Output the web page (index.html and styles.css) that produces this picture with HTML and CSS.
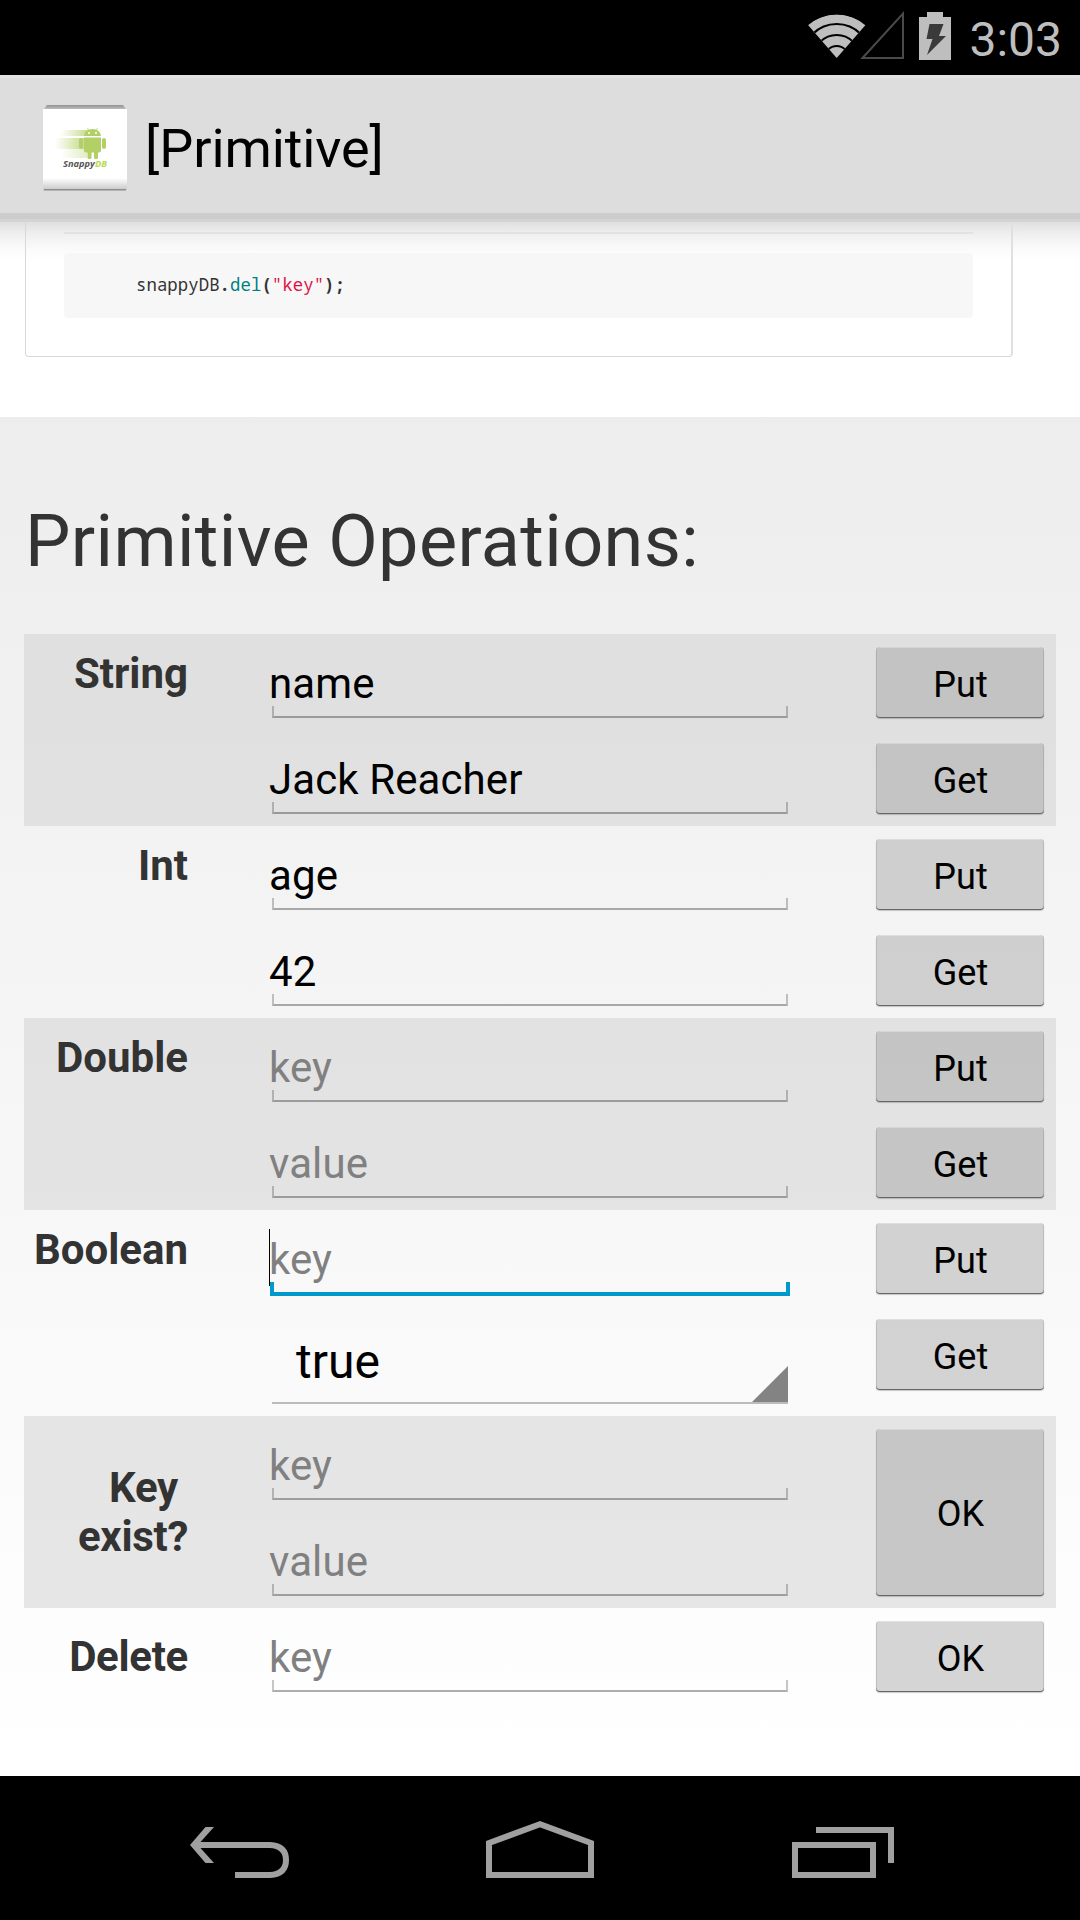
FILE: index.html
```html
<!DOCTYPE html>
<html lang="en">
<head>
<meta charset="utf-8">
<title>Primitive</title>
<link rel="stylesheet" href="styles.css">
</head>
<body>
<header class="status">
  <svg class="status-icons" width="148" height="75" viewBox="808 0 148 75">
    <defs><clipPath id="fan"><path d="M836.7 58 L807.5 24.5 Q836.7 4 866 24.5Z"/></clipPath></defs>
    <g clip-path="url(#fan)">
      <circle cx="836.7" cy="58" r="43.5" fill="#bebebe"/>
      <g fill="none" stroke="#000" stroke-width="2.2">
        <circle cx="836.7" cy="58" r="34"/><circle cx="836.7" cy="58" r="23"/><circle cx="836.7" cy="58" r="12"/>
      </g>
    </g>
    <path d="M862.5 58 L903 13.500 V58Z" fill="none" stroke="#4a4a4a" stroke-width="2"/>
    <path d="M919 17h8v-5h16v5h8v43h-32z" fill="#bebebe"/>
    <path d="M929.500 24h14l-4.500 12h7l-19 19 5.500-16h-6z" fill="#3a3a3a"/>
  </svg>
  <span class="clock">3:03</span>
</header>
<div class="actionbar">
  <svg class="logo" width="84" height="86" viewBox="0 0 84 86">
    <defs>
      <linearGradient id="lid" x2="0" y2="1"><stop offset="0" stop-color="#929292"/><stop offset="1" stop-color="#bdbdbd"/></linearGradient>
      <linearGradient id="base" x2="0" y2="1"><stop offset="0" stop-color="#fff"/><stop offset="1" stop-color="#c8c8c8"/></linearGradient>
      <linearGradient id="blur"><stop offset="0" stop-color="#b2d066" stop-opacity="0"/><stop offset="1" stop-color="#b2d066" stop-opacity=".75"/></linearGradient>
    </defs>
    <path d="M1 4 4 0H80L83 4Z" fill="url(#lid)"/>
    <rect y="4" width="84" height="81" fill="#fff"/>
    <rect y="73" width="84" height="12" fill="url(#base)"/>
    <rect x="1" y="84" width="82" height="1.500" fill="#8d8d8d"/>
    <rect x="18" y="25" width="27" height="6" fill="url(#blur)"/>
    <rect x="12" y="33" width="29" height="11" fill="url(#blur)"/>
    <rect x="18" y="44" width="26" height="9" fill="url(#blur)" opacity=".5"/>
    <g fill="#b2d066">
      <path d="M41 31a8.500 7 0 0 1 17 0z"/>
      <path d="M41 32.500h17v13a2 2 0 0 1-2 2h-13a2 2 0 0 1-2-2z"/>
      <rect x="36" y="33" width="4" height="11" rx="2"/><rect x="59" y="33" width="4" height="11" rx="2"/>
      <rect x="44.500" y="45" width="4" height="9" rx="1.500"/><rect x="51" y="45" width="4" height="9" rx="1.500"/>
    </g>
    <path d="M44.500 23l1.500 3M54.500 23l-1.500 3" stroke="#b2d066" stroke-width=".8"/>
    <circle cx="46" cy="28" r="1" fill="#fff"/><circle cx="53" cy="28" r="1" fill="#fff"/>
    <text class="brand" x="20" y="61.500" textLength="44" lengthAdjust="spacingAndGlyphs">Snappy<tspan class="brand-db">DB</tspan></text>
  </svg>
  <h1 class="title">[Primitive]</h1>
</div>
<section class="docs">
  <div class="card">
    <hr class="rule">
    <pre class="code">snappyDB<b>.</b><span class="fn">del</span><b>(</b><span class="str">"key"</span><b>);</b></pre>
  </div>
</section>
<main class="ops">
  <h2 class="heading">Primitive Operations:</h2>
  <div class="row shaded">
    <div class="label">String</div>
    <div class="fields"><div class="field">name</div><div class="field">Jack Reacher</div></div>
    <div class="actions"><button class="btn">Put</button><button class="btn">Get</button></div>
  </div>
  <div class="row">
    <div class="label">Int</div>
    <div class="fields"><div class="field">age</div><div class="field">42</div></div>
    <div class="actions"><button class="btn">Put</button><button class="btn">Get</button></div>
  </div>
  <div class="row shaded">
    <div class="label">Double</div>
    <div class="fields"><div class="field hint">key</div><div class="field hint">value</div></div>
    <div class="actions"><button class="btn">Put</button><button class="btn">Get</button></div>
  </div>
  <div class="row">
    <div class="label">Boolean</div>
    <div class="fields"><div class="field hint focused">key</div><div class="spinner">true</div></div>
    <div class="actions"><button class="btn">Put</button><button class="btn">Get</button></div>
  </div>
  <div class="row shaded">
    <div class="label middle">Key&nbsp;<br>exist?</div>
    <div class="fields"><div class="field hint">key</div><div class="field hint">value</div></div>
    <div class="actions"><button class="btn tall">OK</button></div>
  </div>
  <div class="row">
    <div class="label middle">Delete</div>
    <div class="fields"><div class="field hint">key</div></div>
    <div class="actions"><button class="btn">OK</button></div>
  </div>
</main>
<nav class="navbar">
  <svg width="1080" height="144" viewBox="0 1776 1080 144" fill="none" stroke="#a0a0a0" stroke-width="6">
    <path d="M190 1845 205.500 1827H214L200.500 1842V1848L214 1863H205.500Z" fill="#a0a0a0" stroke="none"/>
    <path d="M198 1845H270Q286 1846 286 1860T270 1875H235"/>
    <path d="M489 1875V1843L540 1824.300 591 1843V1875Z"/>
    <path d="M795 1845H873V1875H795Z"/>
    <path d="M816 1830H891V1863"/>
  </svg>
</nav>
</body>
</html>
```
FILE: styles.css
```css
*, *::before, *::after { box-sizing: border-box; }
body {
  margin: 0;
  width: 1080px;
  height: 1920px;
  display: flex;
  flex-direction: column;
  overflow: hidden;
  background: #fff;
  font-family: Roboto, "Liberation Sans", sans-serif;
  color: #000;
}
.status {
  height: 75px;
  flex: none;
  background: #000;
  display: flex;
  justify-content: flex-end;
  padding-right: 18px;
}
.status-icons { margin-right: 13px; }
.clock { font-size: 48px; line-height: 79px; color: #bebebe; }

.actionbar {
  height: 147px;
  flex: none;
  display: flex;
  padding-left: 43px;
  background: linear-gradient(#e2e2e2 0 2px, #ddd 4px 138px, #ccc 138px 144px, #d4d4d4 144px);
}
.logo { margin-top: 30px; }
.title { margin: 0 0 0 18px; font-size: 54px; font-weight: 400; line-height: 148px; letter-spacing: -.1px; }
.brand { font: italic bold 9px "Open Sans", sans-serif; fill: #555; }
.brand-db { fill: #b5da4c; }

.docs {
  height: 195px;
  flex: none;
  padding: 0 67px 0 25px;
  background: linear-gradient(#e0e0e0, #f0f0f0 13px, #fafafa 26px, #fff 38px);
}
.card {
  height: 135px;
  padding: 10px 38px 0;
  border: 1px solid #d8d8d8;
  border-right: 2px solid #e0e0e0;
  border-top: 0;
  border-radius: 0 0 4px 4px;
}
.rule { margin: 0 0 19px; border: 0; height: 2px; background: #e2e2e2; }
.code {
  margin: 0;
  height: 65px;
  padding-left: 72px;
  border-radius: 4px;
  background: #f7f7f7;
  color: #333;
  font: 17.300px/64px "Droid Sans Mono", "Noto Sans Mono", "DejaVu Sans Mono", monospace;
  letter-spacing: .08px;
}
.fn { color: #008080; }
.str { color: #dd1144; }

.ops {
  height: 1359px;
  flex: none;
  padding: 0 24px;
  background: linear-gradient(#ededed, #fff);
}
.heading {
  margin: 0;
  height: 217px;
  padding: 83px 0 0 1px;
  font-size: 72px;
  font-weight: 400;
  line-height: 84px;
  letter-spacing: .37px;
  color: #333;
}
.row { display: grid; grid-template-columns: 164px 600px 1fr; }
.shaded { background: rgba(207, 207, 207, .5); }
.label {
  padding-top: 15px;
  text-align: right;
  font-size: 42px;
  font-weight: 700;
  line-height: 49px;
  color: #333;
}
.middle { padding-top: 0; align-self: center; letter-spacing: -.3px; }
.fields { padding-left: 82px; display: flex; flex-direction: column; }
.field {
  position: relative;
  height: 96px;
  width: 520px;
  padding-top: 25px;
  font-size: 42px;
  line-height: 49px;
  text-indent: -1px;
  letter-spacing: .1px;
}
.field::after {
  content: "";
  position: absolute;
  left: 2px;
  right: 2px;
  top: 72px;
  height: 12px;
  border: 2px solid rgba(0, 0, 0, .22);
  border-top: 0;
  border-bottom-color: rgba(0, 0, 0, .31);
}
.hint { color: #808080; }
.focused::before {
  content: "";
  position: absolute;
  left: -1px;
  top: 19px;
  width: 1px;
  height: 57px;
  background: #000;
}
.focused::after { left: 0; right: 0; height: 14px; border: 4px solid #09c; border-top: 0; }
.spinner {
  position: relative;
  width: 516px;
  height: 98px;
  margin: 0 0 12px 2px;
  padding-left: 24px;
  font-size: 48px;
  line-height: 111px;
  border-bottom: 2px solid #bbb;
}
.spinner::after {
  content: "";
  position: absolute;
  right: 0;
  bottom: 0;
  border-left: 36px solid transparent;
  border-bottom: 36px solid #838383;
}
.actions { padding: 13px 0 0 88px; display: flex; flex-direction: column; gap: 25px; }
.btn {
  width: 168px;
  height: 71px;
  padding: 4px 0 0 1px;
  border: 0;
  border-radius: 4px;
  background: rgba(153, 153, 153, .4);
  box-shadow: inset 0 -1px 0 #666, inset 1px 0 0 rgba(0, 0, 0, .1), inset -1px 0 0 rgba(0, 0, 0, .1), inset 0 1px 0 rgba(255, 255, 255, .3), 0 1px 1px rgba(0, 0, 0, .2);
  font: 36px Roboto, sans-serif;
  color: #000;
}
.tall { height: 167px; padding-top: 2px; }

.navbar { height: 144px; flex: none; background: #000; }
.navbar svg { display: block; }
```
